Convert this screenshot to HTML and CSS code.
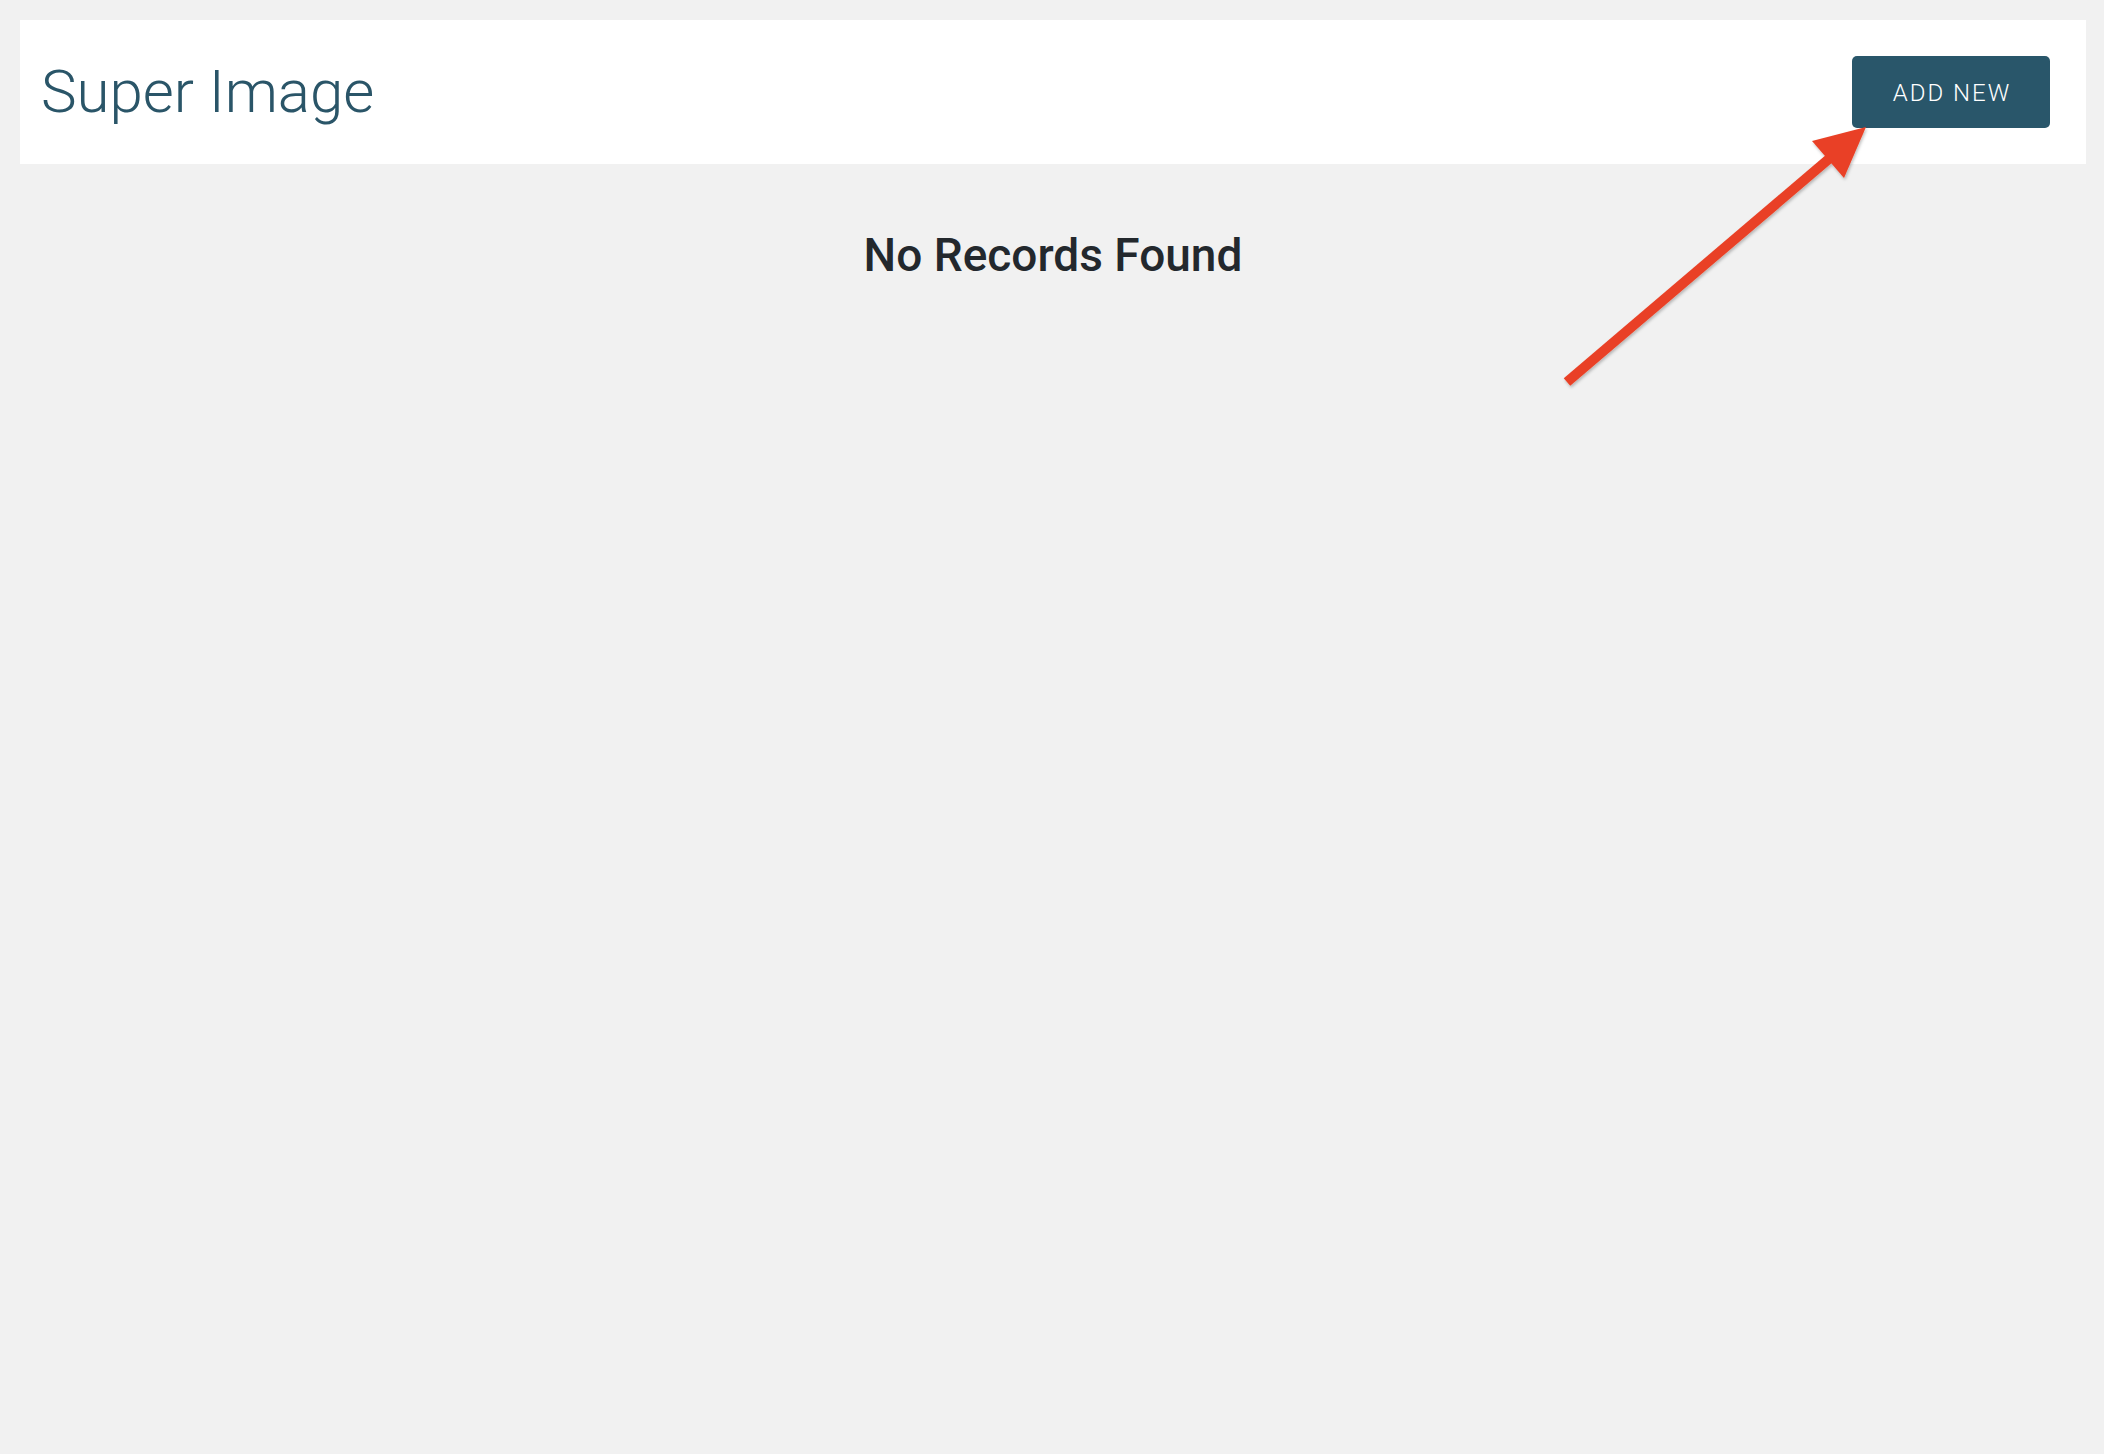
FILE: index.html
```html
<!DOCTYPE html>
<html>
<head>
<meta charset="utf-8">
<link rel="stylesheet" href="styles.css">
</head>
<body>
<div class="page">
  <header class="header">
    <h1 class="title">Super Image</h1>
    <a class="btn" href="#">ADD NEW</a>
  </header>
  <h2 class="empty">No Records Found</h2>
</div>
<svg class="annot" width="2104" height="1454" viewBox="0 0 2104 1454">
  <defs>
    <filter id="sh" x="-20%" y="-20%" width="140%" height="140%">
      <feDropShadow dx="1" dy="2" stdDeviation="1.5" flood-color="#000" flood-opacity="0.25"/>
    </filter>
  </defs>
  <g filter="url(#sh)" fill="#e94125">
    <line x1="1567" y1="382" x2="1830" y2="158" stroke="#e94125" stroke-width="10" stroke-linecap="butt"/>
    <polygon points="1866,127 1812,141 1844,178"/>
  </g>
</svg>
</body>
</html>
```
FILE: styles.css
```css
html, body {
  margin: 0;
  padding: 0;
  background: #f1f1f1;
}
body {
  font-family: Roboto, "Noto Sans", sans-serif;
  min-height: 1454px;
  position: relative;
}
.page {
  padding: 20px 18px 0 20px;
}
.header {
  background: #fff;
  height: 144px;
  display: flex;
  align-items: center;
  justify-content: space-between;
  padding: 0 36px 0 21px;
  box-sizing: border-box;
}
.title {
  margin: 0;
  font-size: 60px;
  line-height: 60px;
  font-weight: 300;
  color: #2a5568;
}
.btn {
  display: flex;
  align-items: center;
  justify-content: center;
  width: 198px;
  height: 72px;
  box-sizing: border-box;
  background: #29566a;
  border-radius: 5px;
  color: #fff;
  text-decoration: none;
  font-size: 24px;
  font-weight: 300;
  letter-spacing: 2px;
  padding: 2px 0 0 2px;
}
.empty {
  margin: 64px 0 0 0;
  text-align: center;
  font-size: 46px;
  line-height: 1.2;
  font-weight: 500;
  color: #23282d;
}
.annot {
  position: absolute;
  left: 0;
  top: 0;
  pointer-events: none;
}
```
